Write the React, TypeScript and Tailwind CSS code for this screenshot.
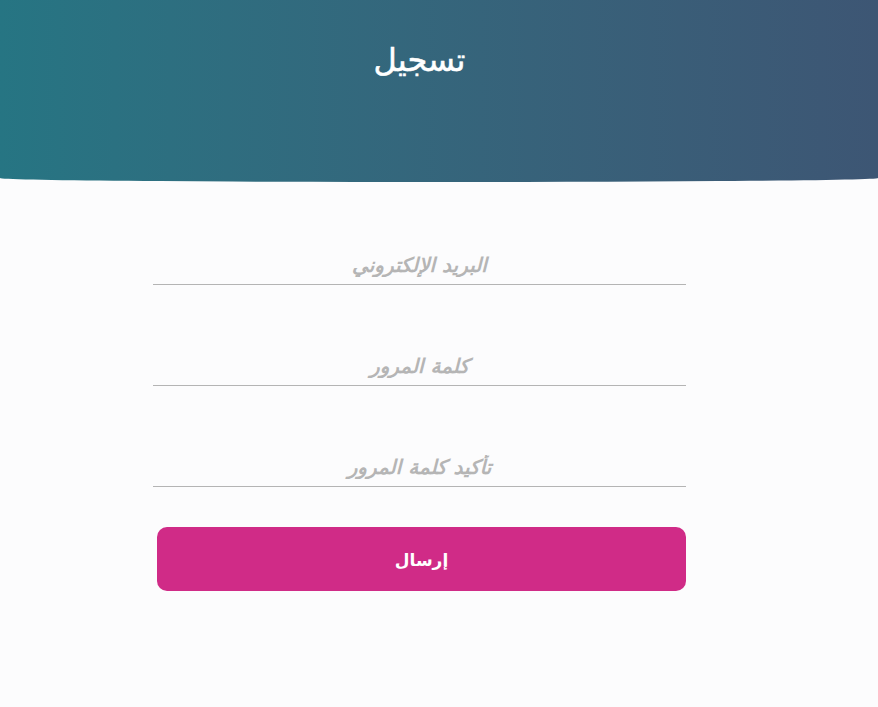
import React from "react";

// حقول نموذج التسجيل
const fields = [
  { name: "email", type: "email", placeholder: "البريد الإلكتروني" },
  { name: "password", type: "password", placeholder: "كلمة المرور" },
  { name: "confirm", type: "password", placeholder: "تأكيد كلمة المرور" },
];

export default function App() {
  return (
    <div
      dir="rtl"
      className="min-h-[707px] bg-[#fcfcfd]"
      style={{ fontFamily: '"DejaVu Sans", "Noto Sans", sans-serif' }}
    >
      {/* رأس الصفحة */}
      <header className="h-[182px] bg-gradient-to-r from-[#267583] to-[#3d5674] rounded-b-[50%_4px] pt-[39px]">
        <div className="w-[533px] mr-[192px] text-center">
          <h1 className="text-[32px] leading-[42px] text-white [-webkit-text-stroke:0.5px_white]">تسجيل</h1>
        </div>
      </header>

      {/* النموذج */}
      <form className="w-[533px] mr-[192px] pt-[63px] flex flex-col">
        {fields.map((f, i) => (
          <input
            key={f.name}
            type={f.type}
            name={f.name}
            placeholder={f.placeholder}
            className={
              "h-[40px] bg-transparent border-b border-[#b4b4b4] text-center text-[20px] font-bold italic placeholder:text-[#b5b5b5] focus:outline-none " +
              (i > 0 ? "mt-[61px]" : "")
            }
          />
        ))}
        <button
          type="button"
          className="mt-[40px] ml-[4px] h-[64px] pt-[3px] rounded-[10px] bg-[#d02b87] text-white text-[17px] font-bold"
        >
          إرسال
        </button>
      </form>
    </div>
  );
}
